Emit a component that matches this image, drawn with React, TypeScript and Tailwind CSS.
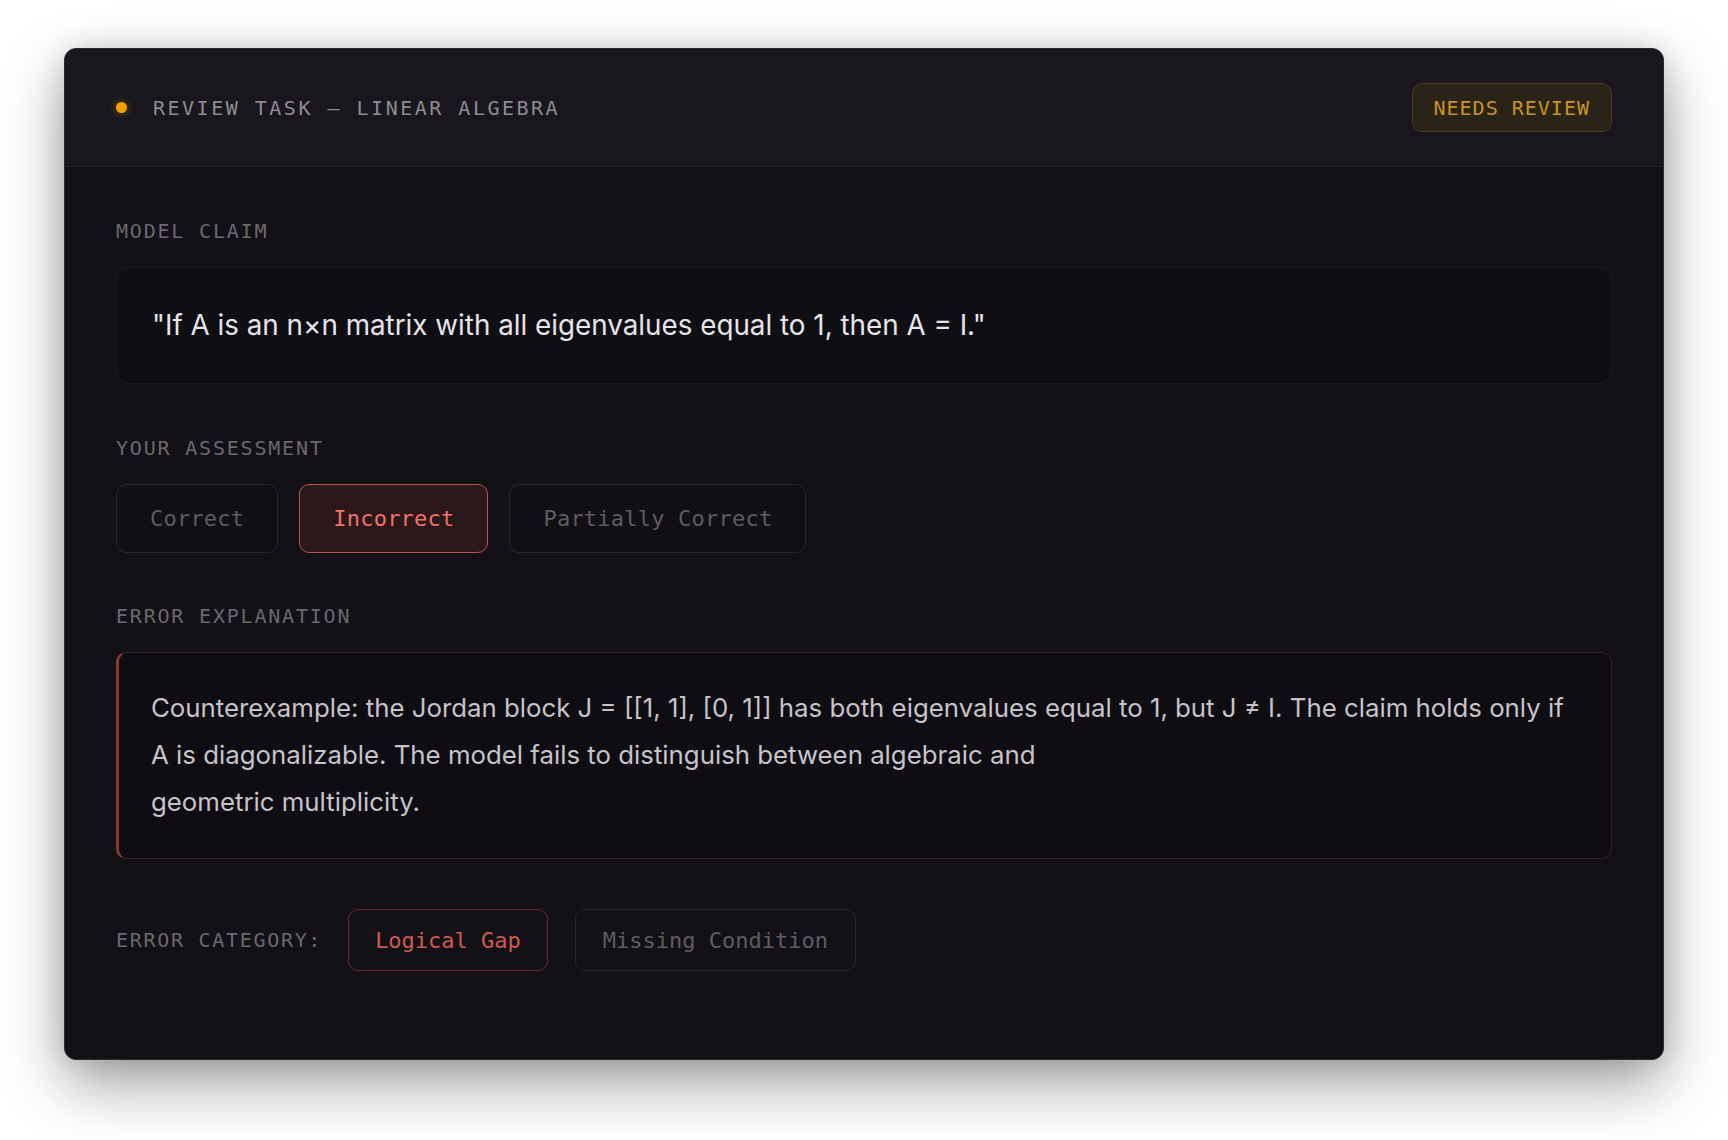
export default function App() {
  const mono = 'font-["DejaVu_Sans_Mono",monospace]';
  return (
    <div className="min-h-screen bg-white px-16 pt-12 pb-20">
      <div className="rounded-[12px] border border-[#2c2a31] bg-[#131116] shadow-[0_24px_60px_rgba(0,0,0,0.38),0_0_28px_rgba(0,0,0,0.12)] overflow-hidden">
        {/* header */}
        <div className="flex h-[118px] items-center justify-between border-b border-[#222026] bg-[#19171d] px-[51px]">
          <div className="flex items-center gap-[26px]">
            <span className="h-[11px] w-[11px] rounded-full bg-[#f0a300] shadow-[0_0_8px_rgba(240,163,0,0.45)]" />
            <span className={`${mono} text-[20px] uppercase tracking-[0.125em] text-[#8e8b93]`}>
              Review Task — Linear Algebra
            </span>
          </div>
          <span
            className={`${mono} flex h-[49px] items-center rounded-[10px] border border-[#4b3a1b] bg-[#2a2318] px-[21px] text-[20px] uppercase tracking-[0.05em] text-[#c9951f]`}
          >
            Needs Review
          </span>
        </div>

        {/* body */}
        <div className="px-[51px] pt-[50px] pb-[88px]">
          <p className={`${mono} text-[20px] leading-[28px] uppercase tracking-[0.09em] text-[#6b6870]`}>Model Claim</p>
          <div className="mt-[22px] rounded-[12px] border border-[#1d1b21] bg-[#0f0e12] px-[35px] py-[34px] font-['Inter',sans-serif] text-[27.8px] leading-[47px] text-[#e6e4ea]">
            "If A is an n×n matrix with all eigenvalues equal to 1, then A = I."
          </div>

          <p className={`${mono} mt-[50px] text-[20px] leading-[28px] uppercase tracking-[0.09em] text-[#6b6870]`}>
            Your Assessment
          </p>
          <div className="mt-[22px] flex gap-[21px]">
            <button className={`${mono} flex h-[69px] items-center rounded-[10px] border border-[#28262c] bg-[#121015] px-[33px] text-[22px] tracking-[0.01em] text-[#5f5c64]`}>
              Correct
            </button>
            <button className={`${mono} flex h-[69px] items-center rounded-[10px] border border-[#b5554b] bg-[#2b181b] px-[33px] text-[22px] tracking-[0.01em] text-[#f2716a]`}>
              Incorrect
            </button>
            <button className={`${mono} flex h-[69px] items-center rounded-[10px] border border-[#28262c] bg-[#121015] px-[33px] text-[22px] tracking-[0.01em] text-[#5f5c64]`}>
              Partially Correct
            </button>
          </div>

          <p className={`${mono} mt-[49px] text-[20px] leading-[28px] uppercase tracking-[0.09em] text-[#6b6870]`}>
            Error Explanation
          </p>
          <div className="mt-[22px] rounded-[10px] border border-[#3a1f21] border-l-[3px] border-l-[#8a3a33] bg-[#0f0d11] pt-[31px] pb-[33px] pl-[32px] pr-[26px] font-['Inter',sans-serif] text-[25.8px] leading-[47px] text-[#c6c3ca]">
            Counterexample: the Jordan block J = [[1, 1], [0, 1]] has both eigenvalues equal to 1, but J ≠ I. The claim holds only if A is diagonalizable. The model fails to distinguish between algebraic and
            <br />
            geometric multiplicity.
          </div>

          <div className="mt-[50px] flex items-center">
            <span className={`${mono} mr-[26px] text-[20px] uppercase tracking-[0.085em] text-[#6b6870]`}>Error Category:</span>
            <span className={`${mono} mr-[27px] flex h-[62px] items-center rounded-[10px] border border-[#5e2b29] px-[26px] text-[22px] text-[#d05a50]`}>
              Logical Gap
            </span>
            <span className={`${mono} flex h-[62px] items-center rounded-[10px] border border-[#28262c] px-[27px] text-[22px] text-[#5f5c64]`}>
              Missing Condition
            </span>
          </div>
        </div>
      </div>
    </div>
  );
}
